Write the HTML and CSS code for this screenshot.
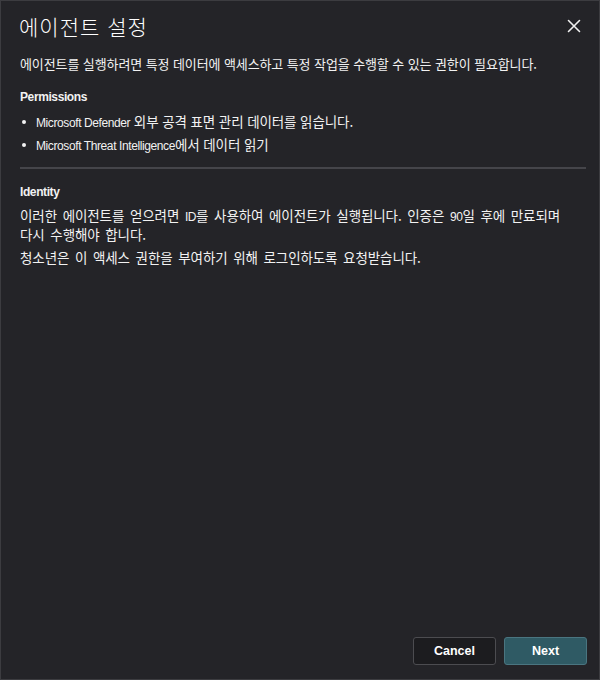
FILE: index.html
```html
<!DOCTYPE html>
<html lang="ko">
<head>
<meta charset="utf-8">
<link rel="stylesheet" href="styles.css">
</head>
<body>
<div class="dialog">
  <header class="head">
    <h1 class="title">에이전트 설정</h1>
    <button class="close" aria-label="닫기">
      <svg width="14" height="14" viewBox="0 0 14 14"><path d="M1.5 1.5 L12.5 12.5 M12.5 1.5 L1.5 12.5" stroke="#f0f0f0" stroke-width="1.6" stroke-linecap="round"/></svg>
    </button>
  </header>
  <div class="body">
    <p class="desc">에이전트를 실행하려면 특정 데이터에 액세스하고 특정 작업을 수행할 수 있는 권한이 필요합니다.</p>
    <h2 class="sub">Permissions</h2>
    <ul class="list">
      <li><span class="en">Microsoft Defender</span> 외부 공격 표면 관리 데이터를 읽습니다.</li>
      <li><span class="en">Microsoft Threat Intelligence</span>에서 데이터 읽기</li>
    </ul>
    <hr class="rule">
    <h2 class="sub">Identity</h2>
    <p class="para">이러한 에이전트를 얻으려면 <span class="en">ID</span>를 사용하여 에이전트가 실행됩니다. 인증은 <span class="en">90</span>일 후에 만료되며<br>다시 수행해야 합니다.</p>
    <p class="para">청소년은 이 액세스 권한을 부여하기 위해 로그인하도록 요청받습니다.</p>
  </div>
  <footer class="foot">
    <button class="btn cancel">Cancel</button>
    <button class="btn next">Next</button>
  </footer>
</div>
</body>
</html>
```
FILE: styles.css
```css
* { box-sizing: border-box; }
html, body { margin: 0; padding: 0; }
body {
  width: 600px;
  height: 680px;
  background: #242428;
  font-family: "Liberation Sans", "Noto Sans CJK KR", sans-serif;
  color: #f2f2f2;
}
.dialog {
  width: 600px;
  height: 680px;
  border: 1px solid #3c3c40;
  background: #242428;
  display: flex;
  flex-direction: column;
}
.head {
  display: flex;
  align-items: center;
  justify-content: space-between;
  padding: 7px 18px 0 18px;
  height: 42px;
}
.title {
  margin: 0;
  font-family: "Noto Sans CJK KR", sans-serif;
  font-weight: 300;
  font-size: 21px;
  letter-spacing: 1px;
  color: #ffffff;
}
.close {
  background: none;
  border: 0;
  padding: 0;
  width: 14px;
  height: 14px;
  display: flex;
}
.body {
  flex: 1;
  padding: 11px 13px 0 19px;
  font-family: "Noto Sans CJK KR", sans-serif;
  font-size: 13px;
  letter-spacing: -0.1px;
}
.en {
  font-family: "Liberation Sans", sans-serif;
  font-size: 12px;
  letter-spacing: -0.4px;
  line-height: 1;
}
.desc { margin: 0 0 15px 0; line-height: 20px; }
.sub {
  margin: 0 0 6px 0;
  font-family: "Liberation Sans", sans-serif;
  font-weight: bold;
  font-size: 12px;
  letter-spacing: -0.4px;
  line-height: 16px;
}
.list {
  margin: 0;
  padding: 0 0 0 16px;
  list-style: none;
  font-size: 13.5px;
}
.list li {
  position: relative;
  line-height: 20px;
  height: 20px;
  margin-bottom: 3px;
}
.list li::before {
  content: "";
  position: absolute;
  left: -14px;
  top: 9px;
  width: 4px;
  height: 4px;
  border-radius: 50%;
  background: #f2f2f2;
}
.rule {
  margin: 13px 0 15px 0;
  border: 0;
  height: 2px;
  background: #45454a;
}
.para {
  margin: 0 0 4px 0;
  line-height: 19px;
  font-size: 13.5px;
  word-spacing: 2px;
}
.foot {
  display: flex;
  justify-content: flex-end;
  gap: 8px;
  padding: 0 12px 14px 0;
}
.btn {
  width: 83px;
  height: 28px;
  border-radius: 3px;
  font-family: "Liberation Sans", sans-serif;
  font-weight: bold;
  font-size: 12.5px;
  color: #ffffff;
  padding: 0;
}
.cancel {
  background: #1c1c1f;
  border: 1px solid #4c4c50;
}
.next {
  background: #2f5a64;
  border: 1px solid #4a7580;
}
```
